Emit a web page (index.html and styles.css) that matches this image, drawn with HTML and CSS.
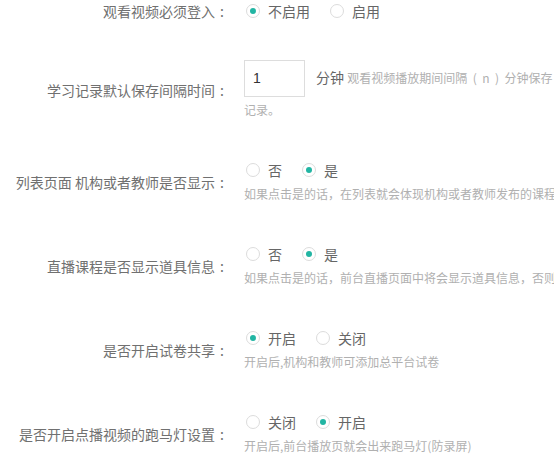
FILE: index.html
```html
<!DOCTYPE html>
<html lang="zh-CN">
<head>
<meta charset="utf-8">
<title>系统设置</title>
<link rel="stylesheet" href="styles.css">
</head>
<body>
<div class="form">
  <div class="row first">
    <div class="label">观看视频必须登入<span class="colon">:</span></div>
    <div class="field">
      <div class="options">
        <label class="opt"><span class="radio on"></span>不启用</label>
        <label class="opt"><span class="radio"></span>启用</label>
      </div>
    </div>
  </div>

  <div class="row">
    <div class="label">学习记录默认保存间隔时间<span class="colon">:</span></div>
    <div class="field flow">
      <span class="input">1</span><span class="unit">分钟</span> <span class="tip">观看视频播放期间间隔<span class="paren">(</span>n<span class="paren">)</span>分钟保存记录。</span>
    </div>
  </div>

  <div class="row">
    <div class="label">列表页面 机构或者教师是否显示<span class="colon">:</span></div>
    <div class="field">
      <div class="options">
        <label class="opt"><span class="radio"></span>否</label>
        <label class="opt"><span class="radio on"></span>是</label>
      </div>
      <div class="help">如果点击是的话，在列表就会体现机构或者教师发布的课程，否则不体现</div>
    </div>
  </div>

  <div class="row">
    <div class="label">直播课程是否显示道具信息<span class="colon">:</span></div>
    <div class="field">
      <div class="options">
        <label class="opt"><span class="radio"></span>否</label>
        <label class="opt"><span class="radio on"></span>是</label>
      </div>
      <div class="help">如果点击是的话，前台直播页面中将会显示道具信息，否则不显示</div>
    </div>
  </div>

  <div class="row">
    <div class="label">是否开启试卷共享<span class="colon">:</span></div>
    <div class="field">
      <div class="options">
        <label class="opt"><span class="radio on"></span>开启</label>
        <label class="opt"><span class="radio"></span>关闭</label>
      </div>
      <div class="help">开启后,机构和教师可添加总平台试卷</div>
    </div>
  </div>

  <div class="row last">
    <div class="label">是否开启点播视频的跑马灯设置<span class="colon">:</span></div>
    <div class="field">
      <div class="options">
        <label class="opt"><span class="radio"></span>关闭</label>
        <label class="opt"><span class="radio on"></span>开启</label>
      </div>
      <div class="help">开启后,前台播放页就会出来跑马灯(防录屏)</div>
    </div>
  </div>
</div>
</body>
</html>
```

FILE: styles.css
```css
html, body {
  margin: 0;
  background: #fff;
  overflow: hidden;
}

body {
  font-family: "Noto Sans CJK SC", "Liberation Sans", sans-serif;
  color: #666;
}

.form {
  padding-top: 1px;
}

.row {
  display: grid;
  grid-template-columns: 229px 1fr;
  column-gap: 15px;
  align-items: center;
  margin-bottom: 40px;
}

.row.first {
  margin-bottom: 39px;
}

.row.last {
  margin-bottom: 0;
}

.label {
  text-align: right;
  font-size: 14px;
  line-height: 20px;
  color: #707070;
  white-space: nowrap;
}

/* colon centred in a full-width cell */
.colon {
  display: inline-block;
  width: 14px;
  text-align: center;
}

.field {
  min-width: 0;
  overflow: hidden;
}

/* radio groups */
.options {
  display: flex;
  align-items: center;
  height: 20px;
  padding-left: 2px;
}

.opt {
  display: flex;
  align-items: center;
  font-size: 14px;
  line-height: 20px;
  color: #666;
  margin-right: 20px;
}

.radio {
  width: 14px;
  height: 14px;
  box-sizing: border-box;
  border: 1px solid #dcdcdc;
  border-radius: 50%;
  margin-right: 8px;
  display: flex;
  align-items: center;
  justify-content: center;
}

.radio.on::after {
  content: "";
  width: 6px;
  height: 6px;
  border-radius: 50%;
  background: #22b5a3;
}

.help {
  margin-top: 4px;
  font-size: 12px;
  line-height: 20px;
  color: #b0b0b0;
  white-space: nowrap;
}

/* text input followed by unit and wrapping hint */
.flow {
  font-size: 14px;
  line-height: 20px;
}

.input {
  display: inline-block;
  width: 61px;
  height: 37px;
  box-sizing: border-box;
  border: 1px solid #ddd;
  padding-left: 8px;
  line-height: 35px;
  font-family: "Liberation Sans", sans-serif;
  font-size: 14px;
  color: #333;
  vertical-align: middle;
  margin-bottom: 2px;
}

.unit {
  margin-left: 11px;
  color: #666;
}

.tip {
  font-size: 12px;
  color: #b0b0b0;
}

/* parentheses set in wide cells */
.paren {
  display: inline-block;
  width: 15px;
  text-align: center;
}
```
